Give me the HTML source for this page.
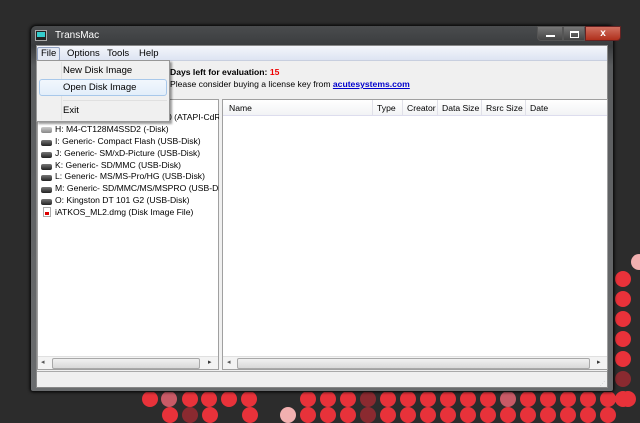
<!DOCTYPE html>
<html><head><meta charset="utf-8"><style>
*{margin:0;padding:0;box-sizing:border-box}
body{width:640px;height:417px;overflow:hidden;background:#2c2c2c;position:relative;font-family:"Liberation Sans",sans-serif;font-size:9px;color:#000}
.dot{position:absolute;width:16px;height:16px;border-radius:50%;background:#e8323a}
.win{position:absolute;left:30px;top:25px;width:584px;height:367px;border:1px solid #111;border-radius:6px 6px 3px 3px;background:linear-gradient(#4a4c4e,#3a3c3e 20px,#5a5c5e 40px,#6a6c6e);box-shadow:0 0 3px #000}
.client{position:absolute;left:5px;top:19px;width:572px;height:343px;background:#f0f0f0;border:1px solid #888}
.title{position:absolute;left:24px;top:4px;color:#fff;font-size:10px}
.abs{position:absolute}
.tree div{position:absolute;left:18px;white-space:nowrap;font-size:8.6px}
.ic{position:absolute;left:4px;width:11px;height:6px;background:linear-gradient(#777,#222);border-radius:2px}
.hdr span{position:absolute;top:3px;font-size:8.6px}
.sb{position:absolute;height:13px;background:#f3f3f3;border-top:1px solid #e0e0e0}
.thumb{position:absolute;top:1px;height:11px;border:1px solid #a8a8a8;border-radius:2px;background:linear-gradient(#f0f0f0,#d8d8d8)}
</style></head><body>
<div id="dots"></div>
<div class="win">
 <div class="abs" style="left:4px;top:4px;width:12px;height:11px;background:#222;border:1px solid #aaa"><div style="margin:1px;width:8px;height:5px;background:#3cc"></div></div>
 <div class="title">TransMac</div>
 <div class="abs" style="left:506px;top:0;width:26px;height:15px;border:1px solid #555;border-radius:0 0 0 4px;background:linear-gradient(#777,#444)"><div style="margin:8px 8px;width:9px;height:2px;background:#fff"></div></div>
 <div class="abs" style="left:532px;top:0;width:22px;height:15px;border:1px solid #555;background:linear-gradient(#777,#444)"><div style="margin:4px 6px;width:9px;height:7px;border:1px solid #fff;border-top-width:2px"></div></div>
 <div class="abs" style="left:554px;top:0;width:36px;height:15px;border:1px solid #622;border-radius:0 0 4px 0;background:linear-gradient(#d07060,#b0301c);color:#fff;font-weight:bold;text-align:center;font-size:10px;line-height:14px">x</div>
 <div class="client">
  <div class="abs" style="left:0;top:0;width:570px;height:15px;background:linear-gradient(#f4f6fb,#dde4f2);border-bottom:1px solid #c8cfdf"></div>
  <div class="abs" style="left:0;top:1px;width:23px;height:14px;border:1px solid #8fa0c0;background:#e4e9f3;border-radius:2px"></div>
  <div class="abs" style="left:4px;top:2px;font-size:9.5px">File</div>
  <div class="abs" style="left:30px;top:2px;font-size:9.5px">Options</div>
  <div class="abs" style="left:70px;top:2px;font-size:9.5px">Tools</div>
  <div class="abs" style="left:102px;top:2px;font-size:9.5px">Help</div>
  <div class="abs" style="left:133px;top:21px;font-weight:bold;font-size:8.6px">Days left for evaluation: <span style="color:#e00">15</span></div>
  <div class="abs" style="left:133px;top:33px;font-size:8.6px">Please consider buying a license key from <span style="color:#00c;font-weight:bold;text-decoration:underline">acutesystems.com</span></div>
  <div class="abs" style="left:0;top:53px;width:182px;height:271px;background:#fff;border:1px solid #a0a0a0"></div>
  <div class="tree abs" style="left:0;top:53px;width:182px;height:258px;overflow:hidden">
   <div style="top:13px;left:130px">0 (ATAPI-CdR</div>
   <div style="top:25px">H: M4-CT128M4SSD2 (-Disk)</div>
   <div style="top:37px">I: Generic- Compact Flash (USB-Disk)</div>
   <div style="top:49px">J: Generic- SM/xD-Picture (USB-Disk)</div>
   <div style="top:61px">K: Generic- SD/MMC (USB-Disk)</div>
   <div style="top:72px">L: Generic- MS/MS-Pro/HG (USB-Disk)</div>
   <div style="top:84px">M: Generic- SD/MMC/MS/MSPRO (USB-Disk)</div>
   <div style="top:96px">O: Kingston DT 101 G2 (USB-Disk)</div>
   <div style="top:108px">iATKOS_ML2.dmg (Disk Image File)</div>
   <span class="ic" style="top:17px;background:#999"></span>
   <span class="ic" style="top:28px;background:linear-gradient(#ccc,#888)"></span>
   <span class="ic" style="top:41px"></span><span class="ic" style="top:53px"></span><span class="ic" style="top:65px"></span><span class="ic" style="top:76px"></span><span class="ic" style="top:88px"></span><span class="ic" style="top:100px"></span>
   <span class="abs" style="left:6px;top:108px;width:8px;height:10px;background:#fff;border:1px solid #aaa"><span style="position:absolute;left:1px;top:4px;width:4px;height:3px;background:#d00"></span></span>
  </div>
  <div class="sb" style="left:1px;top:310px;width:180px"><span class="abs" style="left:3px;top:1px;font-size:7px;color:#555">◂</span><div class="thumb" style="left:14px;width:148px"></div><span class="abs" style="left:170px;top:1px;font-size:7px;color:#333">▸</span></div>
  <div class="abs" style="left:185px;top:53px;width:386px;height:271px;background:#fff;border:1px solid #a0a0a0"></div>
  <div class="hdr abs" style="left:186px;top:54px;width:384px;height:16px;background:linear-gradient(#fff,#f2f3f5);border-bottom:1px solid #dde">
   <span style="left:6px">Name</span><span style="left:154px">Type</span><span style="left:184px">Creator</span><span style="left:219px">Data Size</span><span style="left:263px">Rsrc Size</span><span style="left:307px">Date</span>
   <i class="abs" style="left:149px;top:0;width:1px;height:15px;background:#e0e0e8"></i><i class="abs" style="left:179px;top:0;width:1px;height:15px;background:#e0e0e8"></i><i class="abs" style="left:214px;top:0;width:1px;height:15px;background:#e0e0e8"></i><i class="abs" style="left:258px;top:0;width:1px;height:15px;background:#e0e0e8"></i><i class="abs" style="left:302px;top:0;width:1px;height:15px;background:#e0e0e8"></i>
  </div>
  <div class="sb" style="left:186px;top:310px;width:384px"><span class="abs" style="left:4px;top:1px;font-size:7px;color:#555">◂</span><div class="thumb" style="left:14px;width:353px"></div><span class="abs" style="left:374px;top:1px;font-size:7px;color:#333">▸</span></div>
  <div class="abs" style="left:0;top:325px;width:570px;height:1px;background:#aaa"></div>
 </div>
 <div class="abs" style="left:5px;top:34px;width:134px;height:62px;background:#f0f0f0;border:1px solid #979797;box-shadow:2px 2px 2px rgba(0,0,0,.4)">
  <div class="abs" style="left:24px;top:1px;width:1px;height:58px;background:#e2e3e3"></div>
  <div class="abs" style="left:26px;top:4px;font-size:9.5px">New Disk Image</div>
  <div class="abs" style="left:2px;top:18px;width:128px;height:17px;border:1px solid #a8c8ea;border-radius:3px;background:linear-gradient(#f2f7fd,#e3eefa)"></div>
  <div class="abs" style="left:26px;top:21px;font-size:9.5px">Open Disk Image</div>
  <div class="abs" style="left:26px;top:39px;width:104px;height:1px;background:#e0e0e0"></div>
  <div class="abs" style="left:26px;top:44px;font-size:9.5px">Exit</div>
 </div>
</div>
<div class="abs" style="left:600px;top:381px;width:10px;height:6px;font-size:5px;color:#999">⋰</div>
<script>
var d=document.getElementById('dots'),h='';
function dot(x,y,c){h+='<div class="dot" style="left:'+(x-8)+'px;top:'+(y-8)+'px;'+(c?'background:'+c:'')+'"></div>';}
[142,161,182,201,221,241].forEach(function(x,i){dot(x+8,399,i==1?'#c85a66':null)});
for(var x=300;x<=560;x+=20)dot(x+8,399,x==360?'#8a2a30':(x==500?'#c85a66':null));
dot(588,399);dot(608,399);dot(628,399);
[170,190,210,250].forEach(function(x,i){dot(x,415,i==1?'#8a2a30':null)});
dot(288,415,'#f2b0b0');
for(var x=308;x<=620;x+=20)dot(x,415,x==368?'#8a2a30':null);
for(var y=279;y<=400;y+=20)dot(623,y,y==379?'#8a2a30':null);
dot(639,262,'#f2b0b0');
d.innerHTML=h;
</script>
</body></html>
